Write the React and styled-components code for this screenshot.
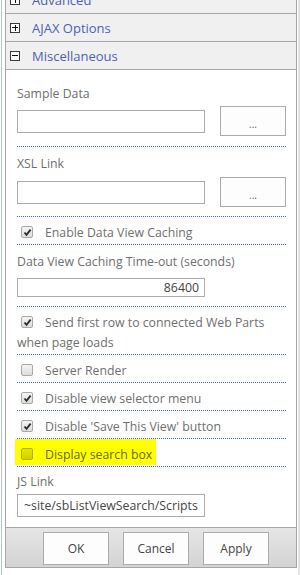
import React from "react";
import styled, { createGlobalStyle } from "styled-components";

const Global = createGlobalStyle`
  html, body { margin: 0; padding: 0; background: #fff; }
  body { font-family: "Open Sans", "Noto Sans", sans-serif; }
`;

const Page = styled.div`
  display: flex;
  height: 575px;
  width: 300px;
  overflow: hidden;
  background: #fff;
`;

const Rule = styled.div`
  flex: none;
  width: ${(p) => p.$w || 1}px;
  margin-left: ${(p) => p.$ml || 0}px;
  background: ${(p) => p.$c};
`;

const Panel = styled.div`
  flex: none;
  width: 292px;
  box-sizing: border-box;
  margin-left: 3px;
  margin-top: -14px;
  align-self: flex-start;
  border: 1px solid #a6a6a6;
  border-top: none;
  background: #fff;
`;

const Header = styled.div`
  display: flex;
  align-items: center;
  height: 27px;
  border-bottom: 1px solid #a6a6a6;
  background: #f0f0f0;
  padding-left: 4px;
  color: #4d5fb8;
  font-size: 13px;
`;

const Toggle = styled.span`
  box-sizing: border-box;
  width: 10px;
  height: 10px;
  border: 1px solid #3a3a3a;
  background: #fff;
  margin-right: 12px;
  display: flex;
  align-items: center;
  justify-content: center;
  position: relative;
  &::before {
    content: "";
    width: 6px;
    height: 1px;
    background: #111;
  }
  &::after {
    content: "";
    display: ${(p) => (p.$open ? "none" : "block")};
    position: absolute;
    width: 1px;
    height: 6px;
    left: 3.5px;
    top: 1px;
    background: #111;
  }
`;

const Body = styled.div`
  padding: 14px 10px 0 11px;
`;

const Section = styled.div`
  padding: ${(p) => p.$pt ?? 6}px 0 ${(p) => p.$pb ?? 9}px;
  border-bottom: ${(p) => (p.$last ? "none" : "1px dotted #4b5bd2")};
`;

const Label = styled.div`
  color: #6f6f6f;
  font-size: 12.3px;
  line-height: 20px;
  white-space: nowrap;
`;

const FieldRow = styled.div`
  display: flex;
  align-items: center;
  justify-content: space-between;
  margin-top: ${(p) => p.$mt ?? 3}px;
`;

const TextBox = styled.input`
  box-sizing: border-box;
  width: 188px;
  height: ${(p) => p.$h || 23}px;
  margin: 0;
  border: 1px solid #ababab;
  background: #fff;
  padding: 0 ${(p) => (p.$right ? 5 : 6)}px;
  font-family: "Open Sans", "Noto Sans", sans-serif;
  font-size: 12.3px;
  color: #444;
  text-align: ${(p) => (p.$right ? "right" : "left")};
  outline: none;
`;

const BrowseButton = styled.button`
  box-sizing: border-box;
  width: 66px;
  height: 30px;
  margin: 0;
  border: 1px solid #ababab;
  background: #fdfdfd;
  color: #666;
  font-family: "Open Sans", sans-serif;
  font-size: 10px;
  padding: 6px 0 0;
  line-height: 1;
`;

const CheckRow = styled.div`
  padding: 6px 0 1px;
  border-bottom: 1px dotted #4b5bd2;
  color: #6f6f6f;
  font-size: 12.3px;
  line-height: 20px;
`;

const Mark = styled.span`
  display: inline-block;
  background: ${(p) => (p.$on ? "#ffff00" : "transparent")};
  margin: -6px 0 0 -2px;
  padding: 6px 4px 0 2px;
  height: 20px;
  color: ${(p) => (p.$on ? "#6a6a00" : "inherit")};
`;

const Box = styled.span`
  display: inline-block;
  box-sizing: border-box;
  width: 12px;
  height: 12px;
  margin: 0 12px 0 4px;
  vertical-align: -1px;
  border: 1px solid ${(p) => (p.$hl ? "#b0b000" : "#a9a9a9")};
  border-radius: 2px;
  background: ${(p) =>
    p.$hl ? "linear-gradient(#e6e600, #d2d200)" : "linear-gradient(#f4f4f4, #dcdcdc)"};
  position: relative;
  svg {
    position: absolute;
    left: 1px;
    top: 1px;
  }
`;

const Footer = styled.div`
  display: flex;
  justify-content: flex-end;
  gap: 14px;
  padding: 4px 27px 2px 0;
  border-top: 1px solid #a6a6a6;
  background: linear-gradient(#e6e6e6, #d3d3d3);
  margin-top: 10px;
`;

const FooterButton = styled.button`
  box-sizing: border-box;
  width: 66px;
  height: 33px;
  margin: 0;
  border: 1px solid #ababab;
  background: #fdfdfd;
  color: #444;
  font-family: "Open Sans", sans-serif;
  font-size: 12px;
  padding: 0;
`;

const Check = () => (
  <svg width="9" height="9" viewBox="0 0 9 9">
    <path d="M1.5 4.5 L3.5 6.8 L7.6 1.6" fill="none" stroke="#2a2a2a" strokeWidth="1.8" />
  </svg>
);

const CheckItem = ({ checked, children, highlight }) => (
  <CheckRow>
    <Mark $on={highlight}>
      <Box $hl={highlight}>{checked && <Check />}</Box>
      {children}
    </Mark>
  </CheckRow>
);

export default function App() {
  return (
    <>
      <Global />
      <Page>
        <Rule $ml={1} $c="#b7c1da" />
        <Panel>
          <Header>
            <Toggle />
            Advanced
          </Header>
          <Header>
            <Toggle />
            AJAX Options
          </Header>
          <Header>
            <Toggle $open />
            Miscellaneous
          </Header>
          <Body>
            <Section $pt={0} $pb={10}>
              <Label>Sample Data</Label>
              <FieldRow $mt={2}>
                <TextBox readOnly />
                <BrowseButton>...</BrowseButton>
              </FieldRow>
            </Section>
            <Section $pt={7}>
              <Label>XSL Link</Label>
              <FieldRow>
                <TextBox readOnly />
                <BrowseButton>...</BrowseButton>
              </FieldRow>
            </Section>
            <CheckItem checked>Enable Data View Caching</CheckItem>
            <Section $pt={7}>
              <Label>Data View Caching Time-out (seconds)</Label>
              <FieldRow $mt={6}>
                <TextBox readOnly $h={19} $right value="86400" />
              </FieldRow>
            </Section>
            <CheckItem checked>Send first row to connected Web Parts when page loads</CheckItem>
            <CheckItem>Server Render</CheckItem>
            <CheckItem checked>Disable view selector menu</CheckItem>
            <CheckItem checked>Disable 'Save This View' button</CheckItem>
            <CheckItem highlight>Display search box</CheckItem>
            <Section $pt={5} $pb={0} $last>
              <Label>JS Link</Label>
              <FieldRow $mt={2}>
                <TextBox readOnly value="~site/sbListViewSearch/Scripts/sbListViewSearch.js" />
              </FieldRow>
            </Section>
          </Body>
          <Footer>
            <FooterButton>OK</FooterButton>
            <FooterButton>Cancel</FooterButton>
            <FooterButton>Apply</FooterButton>
          </Footer>
        </Panel>
        <Rule $ml={1} $w={2} $c="#e4e4e4" />
      </Page>
    </>
  );
}
